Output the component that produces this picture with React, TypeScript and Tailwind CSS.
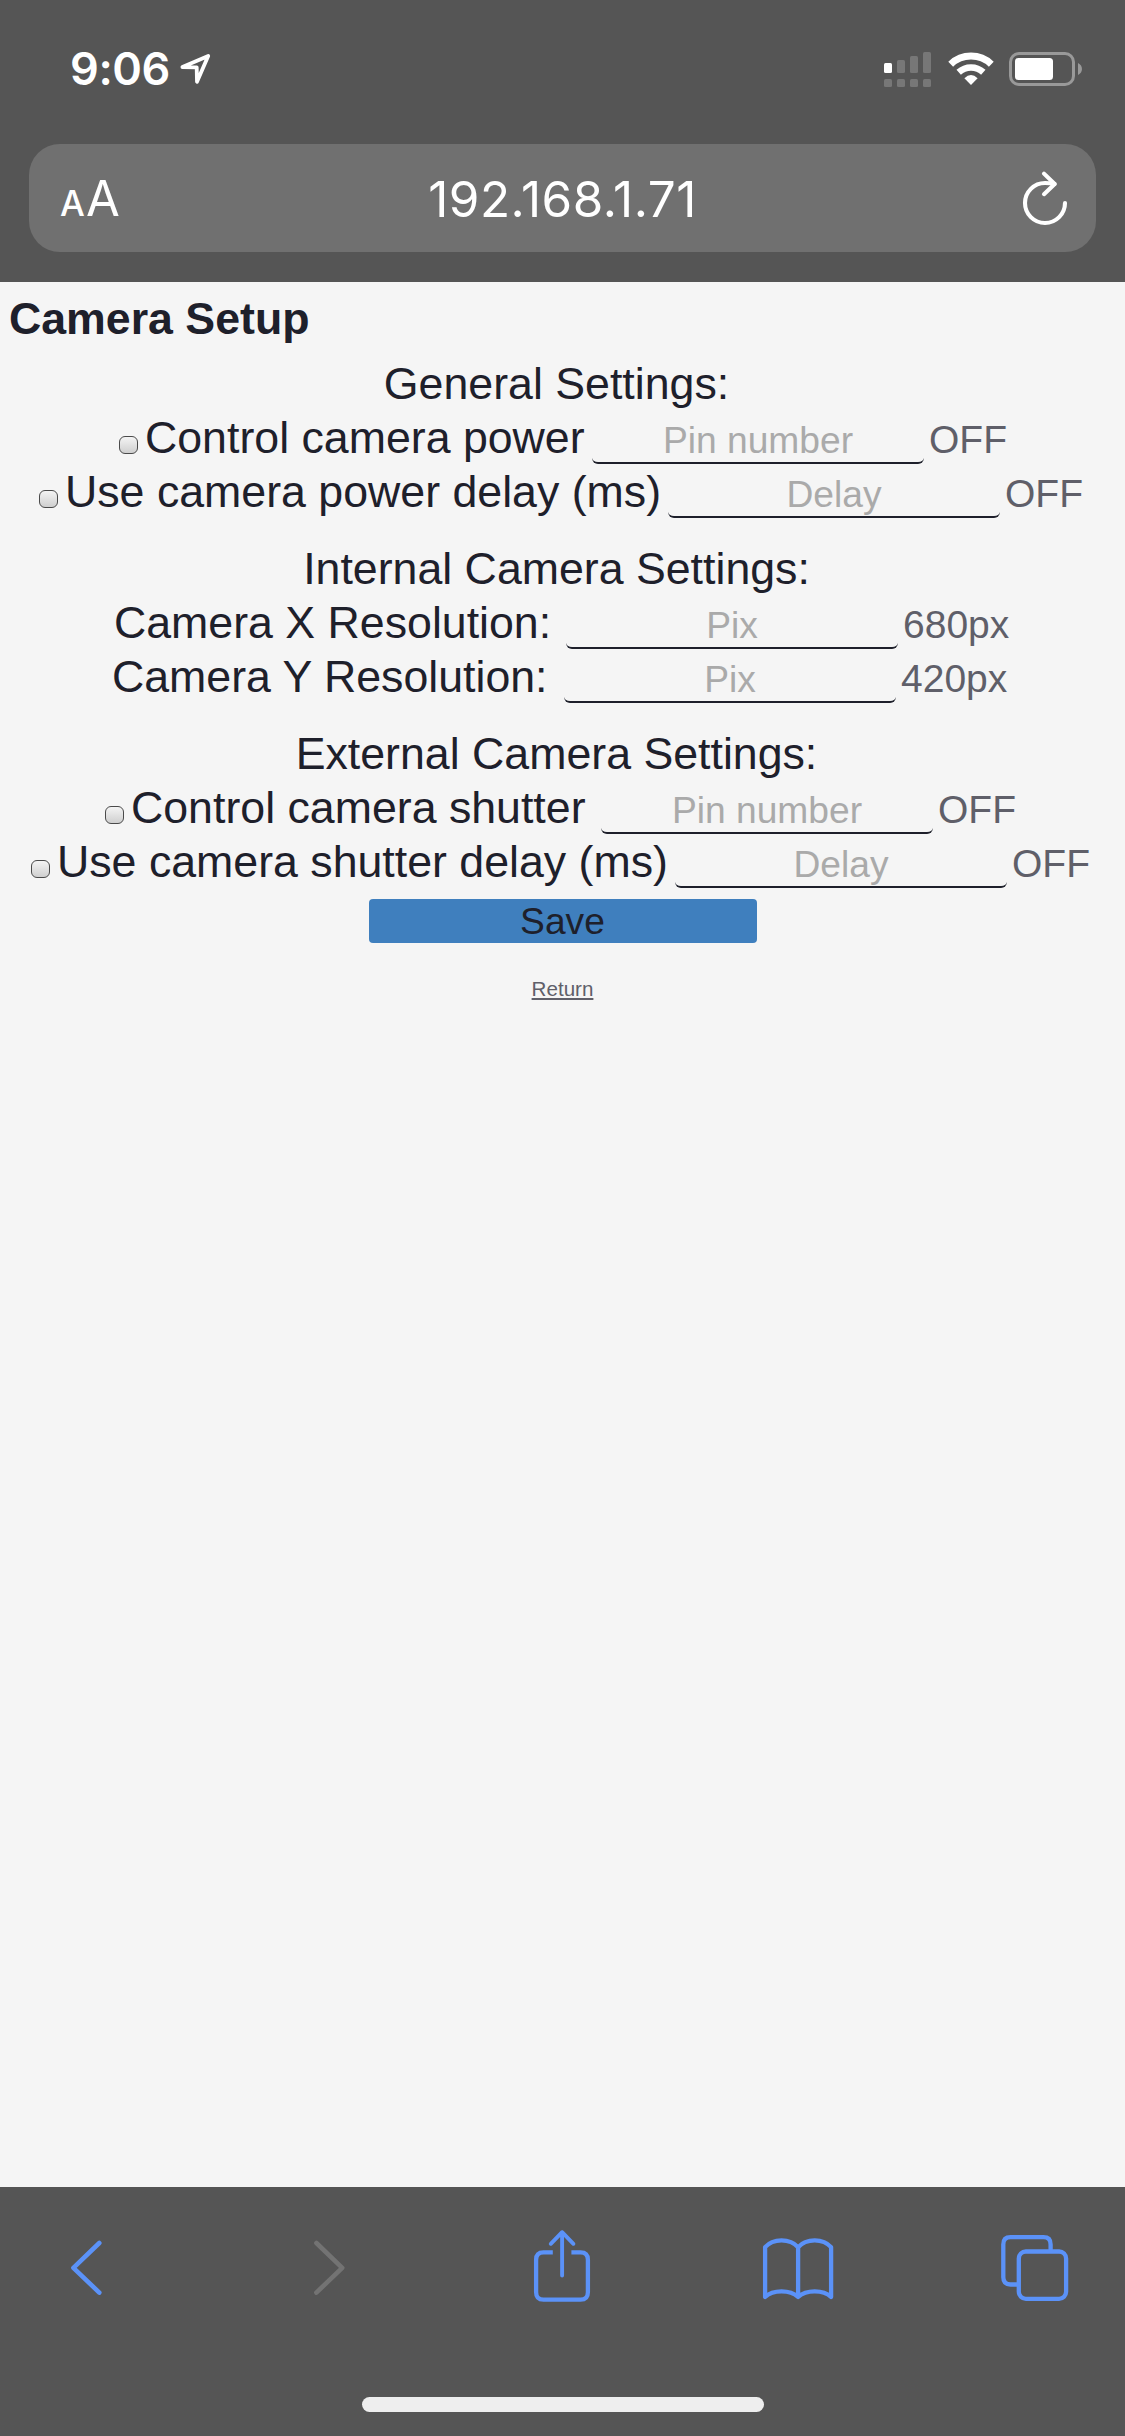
import React from "react";

type RowProps = {
  label: string;
  placeholder: string;
  value: string;
  checkbox?: boolean;
  rowClass: string;
  labelClass: string;
  valueClass: string;
};

function SettingRow({ label, placeholder, value, checkbox, rowClass, labelClass, valueClass }: RowProps) {
  return (
    <div className={`flex h-[54px] items-baseline whitespace-nowrap ${rowClass}`}>
      {checkbox && (
        <input
          type="checkbox"
          aria-label={label}
          className="mr-[7px] mt-[25px] h-[18px] w-[19px] shrink-0 appearance-none self-start rounded-[6px] border border-[#4a4a4a] bg-linear-to-b from-[#f4f4f4] to-[#cfcfcf]"
        />
      )}
      <span className={`shrink-0 leading-[54px] ${labelClass}`}>{label}</span>
      <input
        type="text"
        placeholder={placeholder}
        className="h-[45px] w-[332px] shrink-0 rounded-[6px] border-b-2 border-[#1e202b] bg-transparent p-0 text-center text-[37.2px] placeholder:text-[#aaaaaa]"
      />
      <span className={`text-[39px] leading-[46px] text-[#5f5f69] ${valueClass}`}>{value}</span>
    </div>
  );
}

function SectionTitle({ children }: { children: React.ReactNode }) {
  return <h2 className="h-[54px] pr-[12px] text-center leading-[54px]">{children}</h2>;
}

function StatusBar() {
  return (
    <div className="flex h-[144px] items-start pt-[46px] text-white">
      <span className="ml-[70px] w-[110px] font-['Inter'] text-[45px] leading-[46px] font-semibold tracking-[-0.4px]">9:06</span>
      <svg className="h-[46px] w-[32px]" viewBox="180 46 32 46" fill="none" stroke="white" strokeWidth="3.8" strokeLinejoin="round">
        <path d="M182.4 67 208.2 56 197 81.8 196.7 67.4Z" />
      </svg>
      <svg className="ml-[672px] h-[46px] w-[47px]" viewBox="884 46 47 46" fill="#777777">
        <rect x="884" y="63" width="8" height="10" rx="1.5" fill="white" />
        <rect x="897" y="60" width="8" height="13" rx="1.5" />
        <rect x="910" y="56" width="8" height="17" rx="1.5" />
        <rect x="923" y="52" width="8" height="21" rx="1.5" />
        <rect x="884" y="79" width="8" height="8" rx="1.5" />
        <rect x="897" y="79" width="8" height="8" rx="1.5" />
        <rect x="910" y="79" width="8" height="8" rx="1.5" />
        <rect x="923" y="79" width="8" height="8" rx="1.5" />
      </svg>
      <svg className="ml-[16px] h-[46px] w-[48px]" viewBox="947 46 48 46" fill="none" stroke="white">
        <path d="M950.7 64.2A29.5 29.5 0 0 1 991.3 64.2" strokeWidth="7" />
        <path d="M958.7 72.2A18.4 18.4 0 0 1 983.3 72.2" strokeWidth="6.6" />
        <path d="M971 85 964.4 78.3Q971 71.8 977.6 78.3Z" fill="white" stroke="none" />
      </svg>
      <svg className="ml-[13px] h-[46px] w-[76px]" viewBox="1008 46 76 46">
        <rect x="1010.5" y="53.5" width="63" height="31" rx="8.5" fill="none" stroke="#999999" strokeWidth="3" />
        <rect x="1015" y="58" width="38" height="22" rx="3.5" fill="white" />
        <path d="M1078 63C1083.3 65.5 1083.3 72.5 1078 75Z" fill="#999999" />
      </svg>
    </div>
  );
}

function AddressBar() {
  return (
    <div className="mx-[29px] flex h-[108px] items-center justify-between rounded-[31px] bg-[#707070] text-white">
      <div className="ml-[31px] flex w-[80px] items-baseline pt-[6px] font-['Inter'] leading-[60px]">
        <span className="w-[26px] text-[35px] font-medium">A</span>
        <span className="text-[49px]">A</span>
      </div>
      <span className="pt-[2px] font-['Inter'] text-[49.4px] leading-[60px] tracking-[0.5px]">192.168.1.71</span>
      <div className="flex w-[111px] justify-end pr-[27px]">
        <svg className="h-[58px] w-[48px]" viewBox="1021 169 48 58" fill="none" stroke="white" strokeWidth="4.1" strokeLinecap="round" strokeLinejoin="round">
          <path d="M1065 203A20 20 0 1 1 1045 183Q1050 183 1054.5 184" />
          <path d="M1044 173.6 1054.7 184 1044 194.2" />
        </svg>
      </div>
    </div>
  );
}

function Toolbar() {
  return (
    <footer className="h-[249px] bg-[#555555]">
      <div className="flex h-[210px] items-start pl-[68px] pt-[40px]">
        <svg className="h-[80px] w-[38px]" viewBox="68 2227 38 80" fill="none" stroke="#5b92f8" strokeWidth="4.6" strokeLinecap="round" strokeLinejoin="round">
          <path d="M99.3 2243 73.4 2267.8 99.3 2292.6" />
        </svg>
        <svg className="ml-[204px] h-[80px] w-[38px]" viewBox="310 2227 38 80" fill="none" stroke="#737373" strokeWidth="4.6" strokeLinecap="round" strokeLinejoin="round">
          <path d="M316.4 2243 342.2 2267.8 316.4 2292.6" />
        </svg>
        <svg className="ml-[182px] h-[80px] w-[64px]" viewBox="530 2227 64 80" fill="none" stroke="#5b92f8" strokeWidth="4.3">
          <path d="M552.8 2252.4H543.5Q536.1 2252.4 536.1 2259.8V2292.3Q536.1 2299.7 543.5 2299.7H580.5Q587.9 2299.7 587.9 2292.3V2259.8Q587.9 2252.4 580.5 2252.4H571.4" />
          <path d="M550.8 2243.8 562.1 2232.2 573.4 2243.8M562.1 2232.2V2275.5" strokeWidth="3.9" strokeLinecap="round" strokeLinejoin="round" />
        </svg>
        <svg className="ml-[166px] h-[80px] w-[76px]" viewBox="760 2227 76 80" fill="none" stroke="#5b92f8" strokeWidth="4.3" strokeLinecap="round" strokeLinejoin="round">
          <path d="M765.1 2297V2247.2Q771 2240.4 781.5 2240.4 792 2240.4 798.1 2247.2 804.2 2240.4 814.7 2240.4 825.2 2240.4 831.1 2247.2V2297Q825.2 2291.4 814.7 2291.4 804.2 2291.4 798.1 2297 792 2291.4 781.5 2291.4 771 2291.4 765.1 2297ZM798.1 2247.2V2297" />
        </svg>
        <svg className="ml-[162px] h-[80px] w-[72px]" viewBox="998 2227 72 80" fill="none" stroke="#5b92f8" strokeWidth="4.3">
          <rect x="1018.8" y="2251.5" width="47.3" height="47.3" rx="7" />
          <path d="M1018.8 2284.5H1010.5Q1003.3 2284.5 1003.3 2277.3V2244.4Q1003.3 2237.2 1010.5 2237.2H1043.5Q1050.6 2237.2 1050.6 2244.4V2251" />
        </svg>
      </div>
      <div className="mx-auto h-[15px] w-[402px] rounded-full bg-[#eeeeee]" />
    </footer>
  );
}

export default function App() {
  return (
    <div className="flex h-[2436px] w-[1125px] flex-col overflow-hidden bg-[#f5f5f5] font-['Liberation_Sans',Arial,sans-serif] text-[44.7px] text-[#1e202b]">
      <header className="h-[282px] shrink-0 bg-[#555555]">
        <StatusBar />
        <AddressBar />
      </header>
      <main className="flex-1 pt-[10px]">
        <h1 className="h-[54px] pl-[9px] font-bold leading-[54px]">Camera Setup</h1>
        <form className="mt-[11px]">
          <section>
            <SectionTitle>General Settings:</SectionTitle>
            <SettingRow checkbox label="Control camera power" placeholder="Pin number" value="OFF" rowClass="pl-[119px]" labelClass="w-[447px]" valueClass="ml-[5px]" />
            <SettingRow checkbox label="Use camera power delay (ms)" placeholder="Delay" value="OFF" rowClass="pl-[39px]" labelClass="w-[603px]" valueClass="ml-[5px]" />
          </section>
          <section className="mt-[23px]">
            <SectionTitle>Internal Camera Settings:</SectionTitle>
            <SettingRow label="Camera X Resolution:" placeholder="Pix" value="680px" rowClass="pl-[114px]" labelClass="w-[452px]" valueClass="ml-[5px]" />
            <SettingRow label="Camera Y Resolution:" placeholder="Pix" value="420px" rowClass="pl-[112px]" labelClass="w-[452px]" valueClass="ml-[5px]" />
          </section>
          <section className="mt-[23px]">
            <SectionTitle>External Camera Settings:</SectionTitle>
            <SettingRow checkbox label="Control camera shutter" placeholder="Pin number" value="OFF" rowClass="pl-[105px]" labelClass="w-[470px]" valueClass="ml-[5px]" />
            <SettingRow checkbox label="Use camera shutter delay (ms)" placeholder="Delay" value="OFF" rowClass="pl-[31px]" labelClass="w-[618px]" valueClass="ml-[5px]" />
          </section>
          <button type="button" className="mx-auto mt-[10px] block h-[44px] w-[388px] rounded-[4px] bg-[#3f7fbe] text-[37.2px] leading-[44px]">
            Save
          </button>
        </form>
        <a href="#" className="mx-auto mt-[34px] block w-fit text-[20.6px] leading-[24px] text-[#5f5f69] underline">
          Return
        </a>
      </main>
      <Toolbar />
    </div>
  );
}
